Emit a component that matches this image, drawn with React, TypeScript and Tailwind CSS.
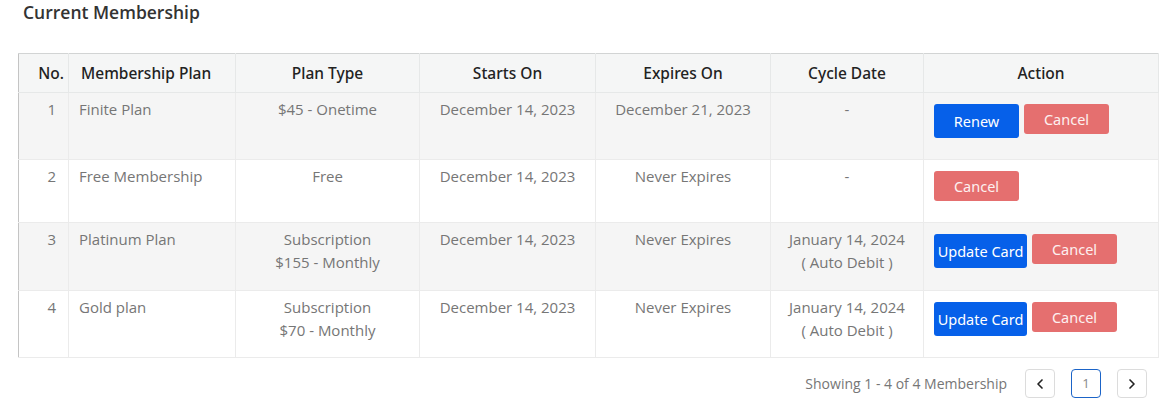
import React from 'react';
import { ChevronLeft, ChevronRight } from 'lucide-react';

interface Membership {
    no: number;
    plan: string;
    type: string[];
    starts: string;
    expires: string;
    cycle: string[];
    action: 'renew' | 'update' | 'cancel';
    height: string;
}

const rows: Membership[] = [
    { no: 1, plan: 'Finite Plan', type: ['$45 - Onetime'], starts: 'December 14, 2023', expires: 'December 21, 2023', cycle: ['-'], action: 'renew', height: 'h-[67px]' },
    { no: 2, plan: 'Free Membership', type: ['Free'], starts: 'December 14, 2023', expires: 'Never Expires', cycle: ['-'], action: 'cancel', height: 'h-[63px]' },
    { no: 3, plan: 'Platinum Plan', type: ['Subscription', '$155 - Monthly'], starts: 'December 14, 2023', expires: 'Never Expires', cycle: ['January 14, 2024', '( Auto Debit )'], action: 'update', height: 'h-[68px]' },
    { no: 4, plan: 'Gold plan', type: ['Subscription', '$70 - Monthly'], starts: 'December 14, 2023', expires: 'Never Expires', cycle: ['January 14, 2024', '( Auto Debit )'], action: 'update', height: 'h-[67px]' },
];

const th = "border border-[#e6e8e8] border-t-[#d2d4d4] font-['Noto_Sans',sans-serif] font-medium text-[15.5px] text-[#222] px-2 h-[39px] text-center";
const td = "border border-[#ebebeb] align-top pt-[5px] px-2 text-center";

export default function App() {
    return (
        <div className="w-[1172px] h-[417px] bg-white font-['Open_Sans',sans-serif] text-[15px] text-[#767676] leading-[23px]">
            <h2 className="pl-[23px] text-[17.5px] leading-[24px] font-semibold text-[#333]">Current Membership</h2>

            <div className="mt-[29px] ml-[18px] w-[1140px]">
                <table className="w-full table-fixed border-collapse">
                    <colgroup>
                        <col className="w-[50px]" />
                        <col className="w-[167px]" />
                        <col className="w-[184px]" />
                        <col className="w-[176px]" />
                        <col className="w-[175px]" />
                        <col className="w-[153px]" />
                        <col className="w-[235px]" />
                    </colgroup>
                    <thead>
                        <tr className="bg-[#f5f6f6]">
                            <th className={`${th} !text-right !pr-[4px] border-l-[#c4c4c4]`}>No.</th>
                            <th className={`${th} !text-left !pl-[12px]`}>Membership Plan</th>
                            <th className={th}>Plan Type</th>
                            <th className={th}>Starts On</th>
                            <th className={th}>Expires On</th>
                            <th className={th}>Cycle Date</th>
                            <th className={th}>Action</th>
                        </tr>
                    </thead>
                    <tbody>
                        {rows.map((r, idx) => (
                            <tr key={r.no} className={`${r.height} ${idx % 2 === 0 ? 'bg-[#f5f5f5]' : 'bg-white'}`}>
                                <td className={`${td} !text-right !pr-[12px] border-l-[#c4c4c4]`}>{r.no}</td>
                                <td className={`${td} !text-left !pl-[10px]`}>{r.plan}</td>
                                <td className={td}>{r.type.map(t => <div key={t}>{t}</div>)}</td>
                                <td className={td}>{r.starts}</td>
                                <td className={td}>{r.expires}</td>
                                <td className={td}>{r.cycle.map(c => <div key={c}>{c}</div>)}</td>
                                <td className="border border-[#ebebeb] align-top pt-[11px] pl-[10px]">
                                    <div className="flex items-start gap-[5px] font-['Noto_Sans',sans-serif] text-[14.5px] text-white">
                                        {r.action === 'renew' && (
                                            <button className="w-[85px] h-[34px] rounded-[3px] bg-[#0660e9]">Renew</button>
                                        )}
                                        {r.action === 'update' && (
                                            <button className="w-[93px] h-[34px] rounded-[3px] bg-[#0660e9]">Update Card</button>
                                        )}
                                        <button className="w-[85px] h-[30px] rounded-[3px] bg-[#e56f6f] text-[#fdf0f0]">Cancel</button>
                                    </div>
                                </td>
                            </tr>
                        ))}
                    </tbody>
                </table>

                <div className="flex items-center justify-end mt-[11px] pr-[11px] gap-4">
                    <span className="text-[14px] text-[#767676] mr-[2px]">Showing 1 - 4 of 4 Membership</span>
                    <button className="w-[30px] h-[29px] flex items-center justify-center rounded-[4px] border border-[#dcdcdc] text-[#222]">
                        <ChevronLeft size={16} strokeWidth={2.5} />
                    </button>
                    <button className="w-[30px] h-[29px] flex items-center justify-center rounded-[4px] border border-[#1b64c8] text-[13px] text-[#888]">1</button>
                    <button className="w-[30px] h-[29px] flex items-center justify-center rounded-[4px] border border-[#dcdcdc] text-[#222]">
                        <ChevronRight size={16} strokeWidth={2.5} />
                    </button>
                </div>
            </div>
        </div>
    );
}
